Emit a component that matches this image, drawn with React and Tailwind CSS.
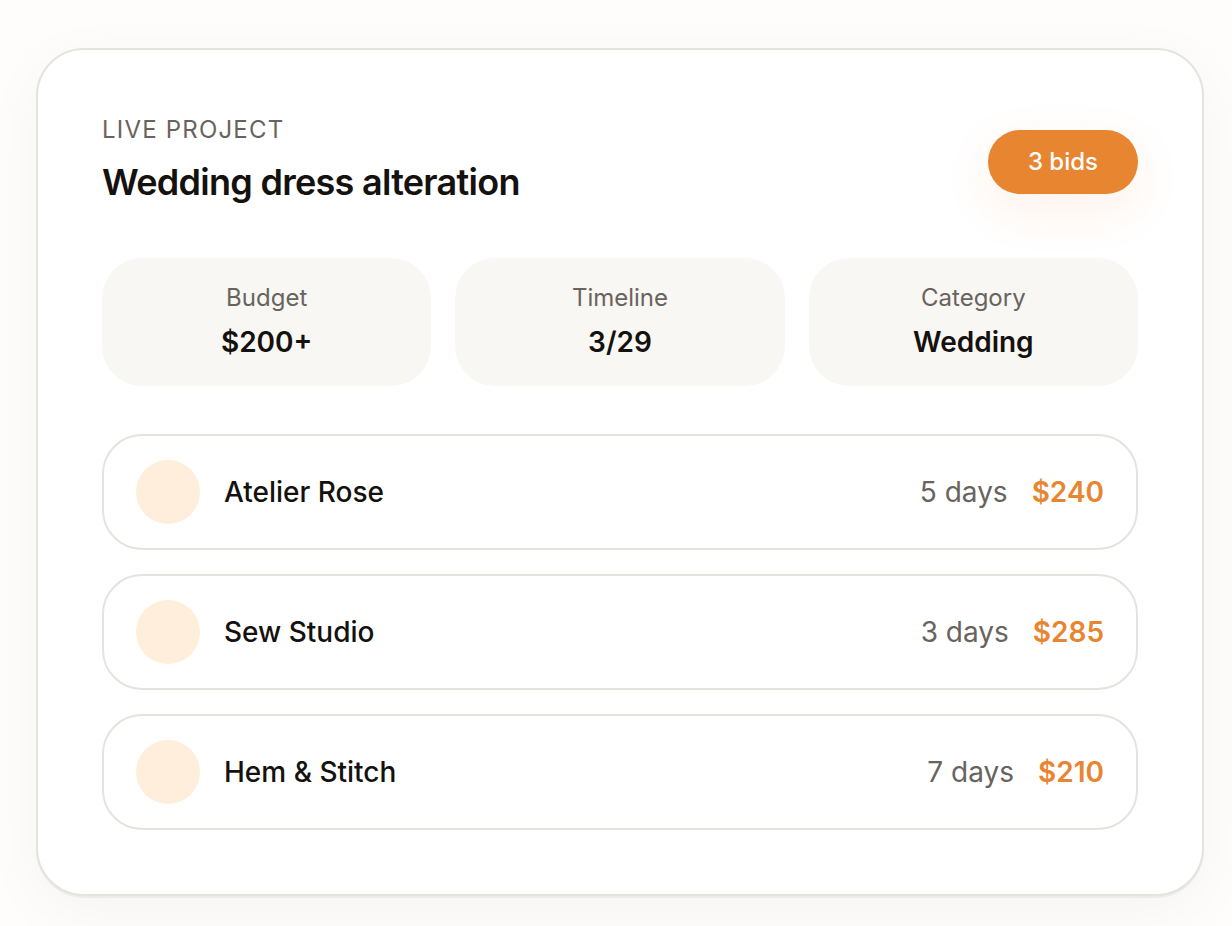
const stats = [
  { label: 'Budget', value: '$200+' },
  { label: 'Timeline', value: '3/29' },
  { label: 'Category', value: 'Wedding' },
];

const bids = [
  { name: 'Atelier Rose', time: '5 days', price: '$240' },
  { name: 'Sew Studio', time: '3 days', price: '$285' },
  { name: 'Hem & Stitch', time: '7 days', price: '$210' },
];

export default function App() {
  return (
    <main className="min-h-screen bg-[#fefdfb] pt-12 pr-7 pb-7 pl-9 font-['Inter',sans-serif] text-[#14110e] antialiased">
      <article className="rounded-[48px] border-2 border-[#e3e3df] bg-white p-16 shadow-[0_2px_0_rgba(20,17,14,0.05),0_16px_64px_rgba(20,17,14,0.04)]">
        <header className="flex items-center justify-between">
          <div>
            <p className="text-2xl leading-8 tracking-wider text-[#69635e] uppercase">Live project</p>
            <h1 className="mt-2 text-4xl leading-14 font-semibold tracking-[-0.02em]">Wedding dress alteration</h1>
          </div>
          <span className="rounded-full bg-[#e78530] px-10 py-4 text-2xl leading-8 font-medium text-white shadow-[0_16px_48px_rgba(235,122,40,0.1)]">
            3 bids
          </span>
        </header>
        <dl className="mt-12 grid grid-cols-3 gap-6">
          {stats.map((s) => (
            <div key={s.label} className="rounded-[40px] bg-[#f8f7f3] p-6 text-center">
              <dt className="text-2xl leading-8 text-[#69635e]">{s.label}</dt>
              <dd className="mt-2 text-[28px] leading-10 font-semibold">{s.value}</dd>
            </div>
          ))}
        </dl>
        <ul className="mt-12 flex flex-col gap-6">
          {bids.map((b) => (
            <li key={b.name} className="flex items-center justify-between rounded-[40px] border-2 border-[#e3e3df] px-8 py-6 text-[28px] leading-10">
              <div className="flex items-center gap-6">
                <span className="size-16 rounded-full bg-[#ffeedb]" />
                <span className="font-medium">{b.name}</span>
              </div>
              <div className="flex items-center gap-6">
                <span className="text-[#69635e]">{b.time}</span>
                <span className="font-semibold text-[#e78530]">{b.price}</span>
              </div>
            </li>
          ))}
        </ul>
      </article>
    </main>
  );
}
